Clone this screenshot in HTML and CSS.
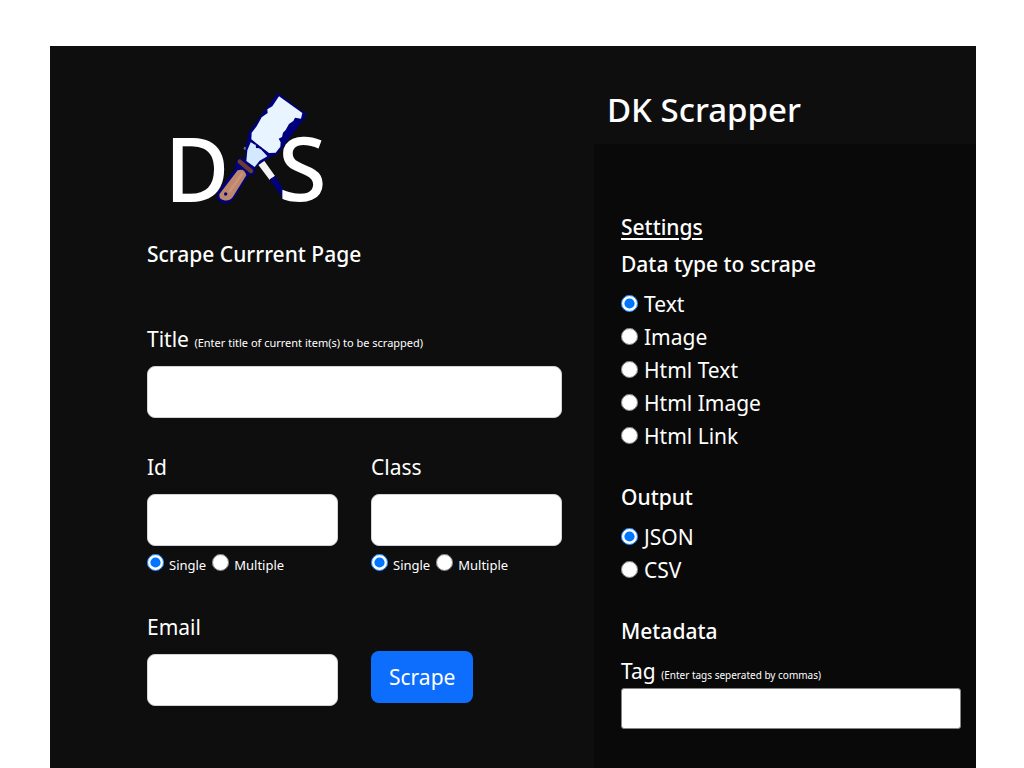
FILE: index.html
```html
<!DOCTYPE html>
<html lang="en">
<head>
<meta charset="utf-8">
<meta name="viewport" content="width=device-width, initial-scale=1">
<title>DK Scrapper</title>
<link rel="stylesheet" href="styles.css">
</head>
<body>
<div class="app">
  <main class="main">
    <svg class="logo" viewBox="-9 36 540 420" role="img" aria-label="DKS">
      <text class="logo-letter" x="44" y="367">D</text>
      <circle cx="286" cy="205" r="5" fill="#667088"/>
      <path d="M323 252 L341 240 L375 288 L359 300 Z" fill="#f6f2f4"/>
      <path d="M359 298 L375 288 L398 326 L398 354 Z" fill="#00007f"/>
      <text class="logo-letter" x="384" y="362">S</text>
      <path d="M383 39 L471 104 L384 220 L350 238 L316 262 L313 285 L296 284 L251 356 Q241 371 221 370 Q201 366 200 346 L203 337 L255 266 L260 240 L271 233 L286 240 L286 211 L296 157 L347 88 Z" fill="#00007f"/>
      <path d="M387 49 L457 99 L453 116 L435 113 L430 123 L417 132 L407 150 L399 158 L396 171 L386 176 L392 187 L391 200 L377 218 L357 219 L337 204 L304 178 L305 158 L320 139 L335 112 L353 99 L352 88 L367 79 Z" fill="#e8f4ff"/>
      <path d="M302 187 L317 194 L318 204 L330 205 L352 229 L329 242 L314 261 L289 243 L292 211 Z" fill="#d4e9ff"/>
      <path d="M302 181 L357 224" stroke="#00007f" stroke-width="5" stroke-dasharray="18 5"/>
      <path d="M269 245 L303 273" stroke="#6b3b32" stroke-width="13" stroke-linecap="round"/>
      <path d="M263 271 Q284 263 289 286 L248 352 Q238 364 222 361 Q207 359 208 343 Z" fill="#bd876d"/>
      <path d="M278 279 L238 336" stroke="#c99478" stroke-width="7"/>
      <circle cx="227" cy="342" r="5" fill="#00007f"/>
    </svg>
    <h2 class="heading page-heading">Scrape Currrent Page</h2>
    <form class="form">
      <div class="field field-wide">
        <label class="label" for="title">Title <small class="hint">(Enter title of current item(s) to be scrapped)</small></label>
        <input class="input" id="title" type="text">
      </div>
      <div class="field">
        <label class="label" for="id">Id</label>
        <input class="input" id="id" type="text">
        <div class="modes">
          <input class="radio" type="radio" name="id-mode" id="id-single" checked><label for="id-single">Single</label>
          <input class="radio" type="radio" name="id-mode" id="id-multiple"><label for="id-multiple">Multiple</label>
        </div>
      </div>
      <div class="field">
        <label class="label" for="class">Class</label>
        <input class="input" id="class" type="text">
        <div class="modes">
          <input class="radio" type="radio" name="class-mode" id="class-single" checked><label for="class-single">Single</label>
          <input class="radio" type="radio" name="class-mode" id="class-multiple"><label for="class-multiple">Multiple</label>
        </div>
      </div>
      <div class="field">
        <label class="label" for="email">Email</label>
        <input class="input" id="email" type="email">
      </div>
      <div class="action">
        <button class="button" type="button">Scrape</button>
      </div>
    </form>
  </main>
  <aside class="side">
    <h1 class="brand">DK Scrapper</h1>
    <div class="settings">
      <h2 class="heading underlined">Settings</h2>
      <section class="group" role="radiogroup" aria-labelledby="type-heading">
        <h3 class="heading" id="type-heading">Data type to scrape</h3>
        <div class="option"><input class="radio" type="radio" name="type" id="t-text" checked><label for="t-text">Text</label></div>
        <div class="option"><input class="radio" type="radio" name="type" id="t-image"><label for="t-image">Image</label></div>
        <div class="option"><input class="radio" type="radio" name="type" id="t-htext"><label for="t-htext">Html Text</label></div>
        <div class="option"><input class="radio" type="radio" name="type" id="t-himage"><label for="t-himage">Html Image</label></div>
        <div class="option"><input class="radio" type="radio" name="type" id="t-hlink"><label for="t-hlink">Html Link</label></div>
      </section>
      <section class="group" role="radiogroup" aria-labelledby="output-heading">
        <h3 class="heading" id="output-heading">Output</h3>
        <div class="option"><input class="radio" type="radio" name="output" id="o-json" checked><label for="o-json">JSON</label></div>
        <div class="option"><input class="radio" type="radio" name="output" id="o-csv"><label for="o-csv">CSV</label></div>
      </section>
      <section class="group">
        <h3 class="heading">Metadata</h3>
        <label class="tag-label" for="tag">Tag <small class="hint hint-small">(Enter tags seperated by commas)</small></label>
        <input class="tag-input" id="tag" type="text">
      </section>
    </div>
  </aside>
</div>
</body>
</html>
```
FILE: styles.css
```css
* {
  box-sizing: border-box;
}

body {
  margin: 0;
  padding: 46px 48px 0 50px;
  background: #fff;
  color: #fff;
  font-family: "Noto Sans", "Open Sans", sans-serif;
  font-size: 21px;
  line-height: 32px;
}

.app {
  display: grid;
  grid-template-columns: 544fr 382fr;
  min-height: calc(100vh - 46px);
  background: #0e0e0e;
}

.main {
  padding: 46px 32px 32px 97px;
}

.logo {
  display: block;
  width: 180px;
  height: 140px;
}

.logo-letter {
  fill: #fff;
  font-family: "Noto Sans", "Open Sans", sans-serif;
  font-size: 265px;
  font-weight: 500;
}

.heading {
  margin: 0;
  font-size: 21px;
  line-height: 37px;
  font-weight: 500;
}

.page-heading {
  margin: 4px 0 50px;
}

.form {
  display: grid;
  grid-template-columns: 1fr 1fr;
  column-gap: 33px;
  row-gap: 33px;
}

.field {
  display: flex;
  flex-direction: column;
}

.field-wide {
  grid-column: 1 / -1;
}

.label {
  margin-bottom: 11px;
}

.hint {
  font-size: 11px;
  line-height: 1;
}

.hint-small {
  font-size: 10px;
}

.input {
  width: 100%;
  height: 52px;
  padding: 8px 16px;
  border: 1px solid #ced4da;
  border-radius: 8px;
  background: #fff;
  font: inherit;
}

.modes {
  display: flex;
  align-items: center;
  height: 32px;
  font-size: 13px;
}

.modes label {
  margin: 6px 6px 0 5px;
}

.radio {
  flex: none;
  width: 17px;
  height: 17px;
  margin: 0;
  accent-color: #0075ff;
}

.action {
  display: flex;
  align-items: flex-end;
  padding-bottom: 3px;
}

.button {
  height: 52px;
  padding: 0 18px;
  border: 0;
  border-radius: 8px;
  background: #0d6efd;
  color: #fff;
  font: inherit;
}

.side {
  display: flex;
  flex-direction: column;
}

.brand {
  margin: 0;
  padding: 44px 13px 14px;
  font-size: 33px;
  line-height: 40px;
  font-weight: 500;
}

.settings {
  flex: 1;
  padding: 65px 15px 39px 27px;
  background: #090909;
}

.underlined {
  text-decoration: underline;
  text-underline-offset: 3px;
  text-decoration-thickness: 2px;
}

.group {
  margin-bottom: 27px;
}

.group .heading {
  margin-bottom: 4px;
}

.option {
  display: flex;
  align-items: center;
  gap: 6px;
  height: 33px;
}

.tag-label {
  display: block;
  line-height: 34px;
}

.tag-input {
  display: block;
  width: 100%;
  height: 41px;
  padding: 2px 8px;
  border: 1px solid #858585;
  border-radius: 3px;
  background: #fff;
  font: inherit;
}
```
